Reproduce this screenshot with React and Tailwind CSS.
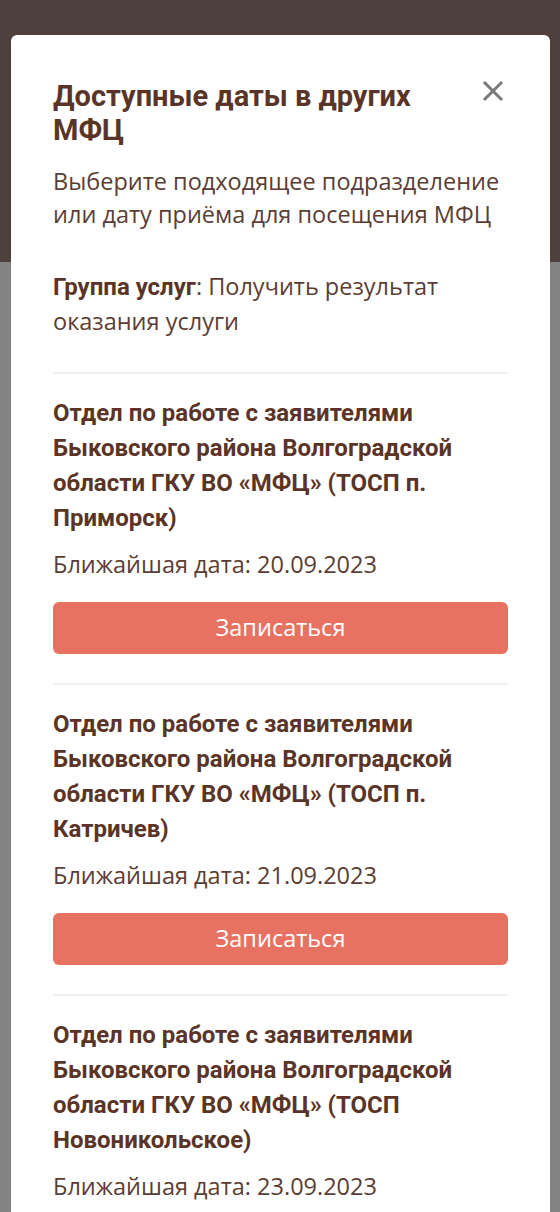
import React from 'react';

const offices = [
  { name: 'Отдел по работе с заявителями Быковского района Волгоградской области ГКУ ВО «МФЦ» (ТОСП п. Приморск)', date: '20.09.2023' },
  { name: 'Отдел по работе с заявителями Быковского района Волгоградской области ГКУ ВО «МФЦ» (ТОСП п. Катричев)', date: '21.09.2023' },
  { name: 'Отдел по работе с заявителями Быковского района Волгоградской области ГКУ ВО «МФЦ» (ТОСП Новоникольское)', date: '23.09.2023' },
];

function OfficeItem({ office }) {
  return (
    <div className="border-t-2 border-[#f0f0f0] pt-[22px] pb-[29px]">
      <h3 className="font-['Roboto',sans-serif] text-[24px] leading-[35px] font-bold text-[#5a3527]">{office.name}</h3>
      <p className="mt-[11px] text-[23.5px] leading-[34px] text-[#5c3d33]">Ближайшая дата: {office.date}</p>
      <button className="mt-[21px] w-full h-[52px] rounded-[6px] bg-[#e87262] text-white text-[23.5px]">
        Записаться
      </button>
    </div>
  );
}

export default function App() {
  return (
    <div className="relative h-[1212px] overflow-hidden bg-[#838383] font-['Open_Sans',sans-serif]">
      <div className="h-[262px] bg-[#4d403d]" />

      {/* Modal */}
      <div className="absolute left-[11px] right-[10px] top-[35px] rounded-[6px] bg-white px-[42px] pt-[44px]">
        <button className="absolute right-[45px] top-[44px] w-[24px] h-[24px] flex items-center justify-center">
          <svg width="22" height="22" viewBox="0 0 22 22">
            <path d="M3 3 L19 19 M19 3 L3 19" stroke="#7a7a7a" strokeWidth="3" strokeLinecap="square" />
          </svg>
        </button>

        <h2 className="pr-[60px] font-['Roboto',sans-serif] text-[29px] leading-[34px] font-bold text-[#5a3527]">
          Доступные даты в других МФЦ
        </h2>
        <p className="mt-[18px] text-[23.5px] leading-[33px] text-[#5c3d33]">
          Выберите подходящее подразделение или дату приёма для посещения МФЦ
        </p>
        <p className="mt-[38px] text-[23.5px] leading-[34px] text-[#5c3d33]">
          <span className="font-['Roboto',sans-serif] text-[24px] font-bold text-[#5a3527]">Группа услуг</span>: Получить результат оказания услуги
        </p>

        <div className="mt-[34px]">
          {offices.map((o, i) => (
            <OfficeItem key={i} office={o} />
          ))}
        </div>
      </div>
    </div>
  );
}
